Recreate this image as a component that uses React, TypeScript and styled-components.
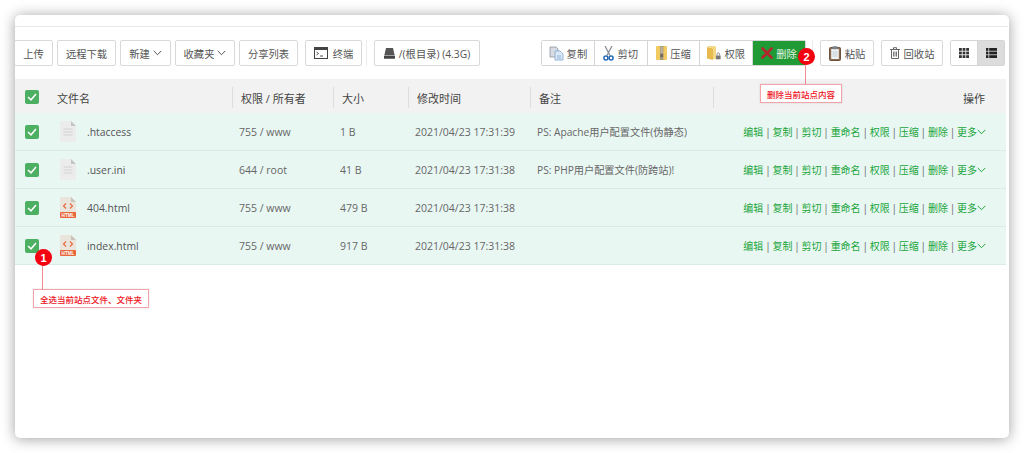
import React from 'react';
import styled, { createGlobalStyle } from 'styled-components';

const GlobalStyle = createGlobalStyle`
  html, body {
    margin: 0;
    padding: 0;
    background: #fff;
    font-family: "Open Sans", "Noto Sans CJK SC", sans-serif;
  }
  * { box-sizing: border-box; }
`;

const Page = styled.div`
  width: 1024px;
  height: 453px;
  padding: 15px 15px 15px 15px;
  overflow: hidden;
`;

const Panel = styled.div`
  position: relative;
  height: 423px;
  background: #fff;
  border-radius: 5px;
  box-shadow: 0 1px 14px rgba(0, 0, 0, 0.38);
  overflow: hidden;
  padding-top: 11px;
`;

const TopRule = styled.div`
  height: 1px;
  margin-right: 1px;
  background: #e8e8e8;
`;

const Toolbar = styled.div`
  display: flex;
  align-items: center;
  height: 26px;
  margin: 13px 4px 13px -1px;
`;

const Group = styled.div`
  display: flex;
  align-items: center;
  gap: 4px;
`;

const RightGroup = styled.div`
  display: flex;
  align-items: center;
  margin-left: auto;
`;

const Btn = styled.div`
  display: flex;
  align-items: center;
  justify-content: center;
  gap: ${p => p.$gap ?? 4}px;
  width: ${p => p.$w}px;
  height: 26px;
  margin-left: ${p => p.$ml ?? 0}px;
  border: 1px solid #d9d9d9;
  border-radius: 2px;
  background: #fff;
  color: #555;
  font-size: 10.3px;
  white-space: nowrap;
`;

const Sep = styled.div`
  width: 1px;
  height: 26px;
  margin: ${p => p.$m};
  background: #ececec;
`;

const BtnGroup = styled.div`
  display: flex;
  width: ${p => p.$w}px;
  height: 26px;
  margin-left: ${p => p.$ml ?? 0}px;
  border: 1px solid #d5d5d5;
  border-radius: 2px;
`;

const GroupBtn = styled.div`
  display: flex;
  flex: 1;
  align-items: center;
  justify-content: center;
  gap: 3px;
  height: 24px;
  background: ${p => (p.$danger ? '#1f9a35' : p.$on ? '#dcdcdc' : '#fff')};
  color: ${p => (p.$danger ? '#e4f5e7' : '#555')};
  border-right: 1px solid #d5d5d5;
  font-size: 10.3px;
  white-space: nowrap;
  &:last-child { border-right: 0; }
`;

const Table = styled.div`
  margin-right: 3px;
`;

const columns = '217px 101px 75px 122px 183px 1fr';

const HeadRow = styled.div`
  display: grid;
  grid-template-columns: ${columns};
  align-items: center;
  height: 34px;
  padding-top: 3px;
  background: #f2f2f2;
  color: #444;
  font-size: 11px;
`;

const HeadCell = styled.div`
  display: flex;
  align-items: center;
  height: 21px;
  padding-left: ${p => p.$pl ?? 8}px;
  border-left: ${p => (p.$first ? '0' : '1px solid #dedede')};
  justify-content: ${p => (p.$right ? 'flex-end' : 'flex-start')};
  padding-right: ${p => (p.$right ? 21 : 0)}px;
`;

const HeadCheck = styled.div`
  margin-top: -2px;
`;

const HeadName = styled.span`
  margin-left: 18px;
`;

const Row = styled.div`
  display: grid;
  grid-template-columns: ${columns};
  align-items: center;
  height: 38px;
  background: #e9f7f3;
  border-bottom: 1px solid #d8ebe6;
  color: #666;
  font-size: 10.5px;
`;

const Cell = styled.div`
  padding-left: 7px;
  white-space: nowrap;
`;

const NoteCell = styled(Cell)`
  font-size: 10.2px;
`;

const NameCell = styled.div`
  display: flex;
  align-items: center;
  padding-left: 10px;
`;

const FileName = styled.span`
  margin-left: 11px;
  color: #555;
  font-size: 10.4px;
`;

const FileIcon = styled.svg`
  margin-left: 21px;
  flex: none;
`;

const Check = styled.div`
  display: flex;
  align-items: center;
  justify-content: center;
  width: 14px;
  height: 14px;
  border-radius: 2px;
  background: #4caf62;
  flex: none;
`;

const Actions = styled.div`
  display: flex;
  align-items: center;
  justify-content: flex-end;
  padding-right: 20px;
  color: #20a53a;
  font-size: 10px;
  white-space: nowrap;
`;

const Pipe = styled.span`
  color: #666;
  margin: 0 1.8px;
`;

const Callout = styled.div`
  position: absolute;
  left: ${p => p.$x}px;
  top: ${p => p.$y}px;
  height: 19px;
  padding: 0 6px;
  display: flex;
  align-items: center;
  border: 1px solid #f5a3ab;
  background: #fff;
  box-shadow: 0 0 2px rgba(0, 0, 0, 0.12);
  color: #ee1122;
  font-size: 8.5px;
  font-weight: 500;
  white-space: nowrap;
`;

const Leader = styled.div`
  position: absolute;
  left: ${p => p.$x}px;
  top: ${p => p.$y}px;
  width: 1px;
  height: ${p => p.$h}px;
  background: #f28a94;
`;

const Badge = styled.div`
  position: absolute;
  left: ${p => p.$x}px;
  top: ${p => p.$y}px;
  width: 17px;
  height: 17px;
  border-radius: 50%;
  background: #f50010;
  color: #fff;
  font-family: "Liberation Sans", sans-serif;
  font-size: 11px;
  font-weight: 700;
  display: flex;
  align-items: center;
  justify-content: center;
`;

const Chevron = () => (
  <svg width="9" height="6" viewBox="0 0 9 6" fill="none">
    <path d="M.7.9l3.8 3.8L8.3.9" stroke="#555" strokeWidth="1" />
  </svg>
);

const GreenChevron = () => (
  <svg width="9" height="6" viewBox="0 0 9 6" fill="none">
    <path d="M.7.9l3.8 3.8L8.3.9" stroke="#20a53a" strokeWidth="1" />
  </svg>
);

const Tick = () => (
  <svg width="10" height="8" viewBox="0 0 10 8" fill="none">
    <path d="M1 4l3 2.8L9 1" stroke="#fff" strokeWidth="1.5" />
  </svg>
);

const TextFile = () => (
  <FileIcon width="16" height="21" viewBox="0 0 16 21">
    <path d="M0 1a1 1 0 0 1 1-1h10l5 5v15a1 1 0 0 1-1 1H1a1 1 0 0 1-1-1z" fill="#ececec" />
    <path d="M11 0l5 5h-5z" fill="#c4c4c4" />
    <path d="M3.5 8h9M3.5 11h9M3.5 14h9" stroke="#d2d2d2" strokeWidth="1" />
  </FileIcon>
);

const HtmlFile = () => (
  <FileIcon width="16" height="21" viewBox="0 0 16 21">
    <path d="M0 1a1 1 0 0 1 1-1h10l5 5v15a1 1 0 0 1-1 1H1a1 1 0 0 1-1-1z" fill="#e9e5dc" />
    <path d="M11 0l5 5h-5z" fill="#c9c4b8" />
    <path d="M6 6.5L3.5 9 6 11.5M10 6.5L12.5 9 10 11.5" fill="none" stroke="#e8663a" strokeWidth="1.1" />
    <rect y="15" width="16" height="6" rx="1" fill="#e8663a" />
    <text x="8" y="19.8" textAnchor="middle" fontSize="4.6" fontWeight="700" fill="#fff" fontFamily="Liberation Sans">HTML</text>
  </FileIcon>
);

const TerminalIcon = () => (
  <svg width="14" height="12" viewBox="0 0 14 12" fill="none">
    <rect x=".5" y=".5" width="13" height="11" fill="#fff" stroke="#444" />
    <path d="M.5 1h13v2H.5z" fill="#444" />
    <path d="M2.5 5l2 1.5-2 1.5M6 9h3" stroke="#444" strokeWidth=".9" />
  </svg>
);

const DiskIcon = () => (
  <svg width="11" height="11" viewBox="0 0 11 11">
    <path d="M2 0h7l1.6 7H.4z" fill="#555" />
    <rect y="7.6" width="11" height="3.2" rx=".6" fill="#444" />
  </svg>
);

const CopyIcon = () => (
  <svg width="15" height="15" viewBox="0 0 15 15">
    <path d="M1 1h6l2 2v8H1z" fill="#d8dce2" stroke="#8e96a0" strokeWidth=".8" />
    <path d="M6 5h5l3 3v6H6z" fill="#dce9f7" stroke="#7fa5cf" strokeWidth=".8" />
    <path d="M8 10h4M8 12h4" stroke="#7fa5cf" strokeWidth=".8" />
  </svg>
);

const CutIcon = () => (
  <svg width="11" height="15" viewBox="0 0 11 15" fill="none">
    <path d="M2 0l5 9.5M9 0L4 9.5" stroke="#8a8f96" strokeWidth="1.3" />
    <circle cx="2.9" cy="12" r="2" stroke="#2a6bb5" strokeWidth="1.5" />
    <circle cx="8.1" cy="12" r="2" stroke="#2a6bb5" strokeWidth="1.5" />
  </svg>
);

const ZipIcon = () => (
  <svg width="11" height="14" viewBox="0 0 11 14">
    <rect width="11" height="14" rx="1" fill="#f2ca62" />
    <rect x="4" width="3.4" height="14" fill="#a59a80" />
    <path d="M4.8 2h1.8M4.8 4h1.8M4.8 6h1.8" stroke="#e8e2d0" strokeWidth=".8" />
    <rect x="4.3" y="8" width="2.8" height="3.2" fill="#6f6a5c" />
  </svg>
);

const LockFolderIcon = () => (
  <svg width="14" height="14" viewBox="0 0 14 14">
    <path d="M0 1l6 1.4V14L0 12.4z" fill="#e8b94d" />
    <path d="M1 0h7l1 1v12H6V2.4L1 1z" fill="#f4d783" />
    <rect x="9" y="9.5" width="4.6" height="3.8" fill="#777" />
    <path d="M10 9.5V8.2a1.3 1.3 0 0 1 2.6 0v1.3" fill="none" stroke="#777" strokeWidth=".8" />
  </svg>
);

const CrossIcon = () => (
  <svg width="12" height="12" viewBox="0 0 12 12">
    <path d="M1.5 1.5l9 9M10.5 1.5l-9 9" stroke="#b5252d" strokeWidth="2.6" strokeLinecap="round" />
  </svg>
);

const PasteIcon = () => (
  <svg width="12" height="15" viewBox="0 0 12 15">
    <rect x=".5" y="1.5" width="11" height="13" rx="1" fill="#8a6b52" stroke="#6d5440" />
    <rect x="2.2" y="3" width="7.6" height="10" fill="#eef2f5" />
    <rect x="3.5" y=".3" width="5" height="3" rx=".6" fill="#7c8288" />
    <path d="M3.5 6h5M3.5 8h5M3.5 10h5" stroke="#b8c2cb" strokeWidth=".8" />
  </svg>
);

const TrashIcon = () => (
  <svg width="10" height="12" viewBox="0 0 10 12" fill="none" stroke="#555">
    <path d="M0 2.5h10M3.5 2.5V.7h3v1.8M1.5 2.5V11.5h7V2.5" strokeWidth=".9" />
    <path d="M3.5 4.5v5M5 4.5v5M6.5 4.5v5" strokeWidth=".8" />
  </svg>
);

const GridIcon = () => (
  <svg width="10" height="10" viewBox="0 0 10 10" fill="#333">
    {[0, 3.6, 7.2].flatMap(y =>
      [0, 3.6, 7.2].map(x => <rect key={`${x}-${y}`} x={x} y={y} width="2.8" height="2.8" />)
    )}
  </svg>
);

const ListIcon = () => (
  <svg width="11" height="10" viewBox="0 0 11 10" fill="#222">
    {[0, 3.6, 7.2].map(y => (
      <React.Fragment key={y}>
        <rect x="0" y={y} width="2.4" height="2.8" />
        <rect x="3.2" y={y} width="7.8" height="2.8" />
      </React.Fragment>
    ))}
  </svg>
);

const files = [
  { name: '.htaccess', perm: '755 / www', size: '1 B', time: '2021/04/23 17:31:39', note: 'PS: Apache用户配置文件(伪静态)', html: false },
  { name: '.user.ini', perm: '644 / root', size: '41 B', time: '2021/04/23 17:31:38', note: 'PS: PHP用户配置文件(防跨站)!', html: false },
  { name: '404.html', perm: '755 / www', size: '479 B', time: '2021/04/23 17:31:38', note: '', html: true },
  { name: 'index.html', perm: '755 / www', size: '917 B', time: '2021/04/23 17:31:38', note: '', html: true },
];

const actions = ['编辑', '复制', '剪切', '重命名', '权限', '压缩', '删除'];

export default function App() {
  return (
    <Page>
      <GlobalStyle />
      <Panel>
        <TopRule />
        <Toolbar>
          <Group>
            <Btn $w={39}>上传</Btn>
            <Btn $w={59}>远程下载</Btn>
            <Btn $w={51} $gap={3}>新建<Chevron /></Btn>
            <Btn $w={60} $gap={3}>收藏夹<Chevron /></Btn>
            <Btn $w={59}>分享列表</Btn>
            <Btn $w={57} $ml={3} $gap={5}><TerminalIcon />终端</Btn>
          </Group>
          <Sep $m="0 7px 0 4px" />
          <Btn $w={106}><DiskIcon />/(根目录) (4.3G)</Btn>
          <RightGroup>
            <BtnGroup $w={265}>
              <GroupBtn><CopyIcon />复制</GroupBtn>
              <GroupBtn><CutIcon />剪切</GroupBtn>
              <GroupBtn><ZipIcon />压缩</GroupBtn>
              <GroupBtn><LockFolderIcon />权限</GroupBtn>
              <GroupBtn $danger><CrossIcon />删除</GroupBtn>
            </BtnGroup>
            <Sep $m="0 7px 0 6px" />
            <Btn $w={54}><PasteIcon />粘贴</Btn>
            <Btn $w={62} $ml={7}><TrashIcon />回收站</Btn>
            <BtnGroup $w={55} $ml={7}>
              <GroupBtn><GridIcon /></GroupBtn>
              <GroupBtn $on><ListIcon /></GroupBtn>
            </BtnGroup>
          </RightGroup>
        </Toolbar>
        <Table>
          <HeadRow>
            <HeadCell $first $pl={10}>
              <HeadCheck><Check><Tick /></Check></HeadCheck>
              <HeadName>文件名</HeadName>
            </HeadCell>
            <HeadCell>权限 / 所有者</HeadCell>
            <HeadCell>大小</HeadCell>
            <HeadCell>修改时间</HeadCell>
            <HeadCell>备注</HeadCell>
            <HeadCell $right>操作</HeadCell>
          </HeadRow>
          {files.map(file => (
            <Row key={file.name}>
              <NameCell>
                <Check><Tick /></Check>
                {file.html ? <HtmlFile /> : <TextFile />}
                <FileName>{file.name}</FileName>
              </NameCell>
              <Cell>{file.perm}</Cell>
              <Cell>{file.size}</Cell>
              <Cell>{file.time}</Cell>
              <NoteCell>{file.note}</NoteCell>
              <Actions>
                {actions.map(a => (
                  <React.Fragment key={a}>
                    {a}
                    <Pipe>|</Pipe>
                  </React.Fragment>
                ))}
                更多
                <GreenChevron />
              </Actions>
            </Row>
          ))}
        </Table>
        <Leader $x={27} $y={245} $h={30} />
        <Badge $x={20} $y={234}>1</Badge>
        <Callout $x={18} $y={274}>全选当前站点文件、文件夹</Callout>
        <Leader $x={790} $y={45} $h={25} />
        <Badge $x={783} $y={33}>2</Badge>
        <Callout $x={745} $y={69}>删除当前站点内容</Callout>
      </Panel>
    </Page>
  );
}
